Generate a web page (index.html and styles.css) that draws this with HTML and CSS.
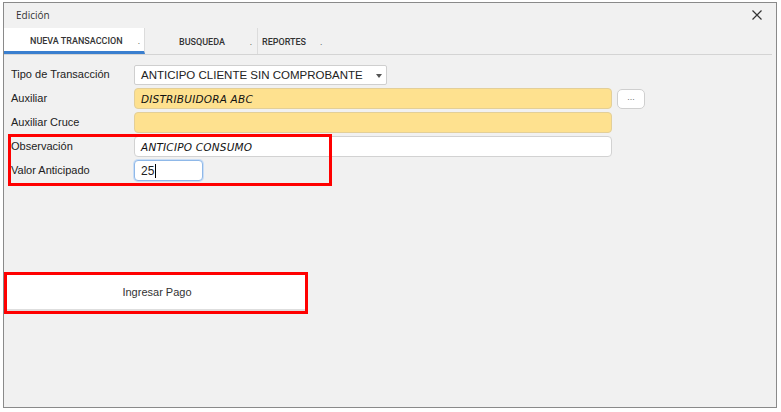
FILE: index.html
```html
<!DOCTYPE html>
<html lang="es">
<head>
    <meta charset="UTF-8">
    <title>Edición</title>
    <link rel="stylesheet" href="styles.css">
</head>
<body>
    <div class="window">
        <div class="titlebar">
            <span class="title">Edición</span>
            <span class="close">
                <svg width="10" height="10" viewBox="0 0 10 10"><path d="M0.5 0.5 L9.5 9.5 M9.5 0.5 L0.5 9.5" stroke="#333" stroke-width="1.2"/></svg>
            </span>
        </div>
        <div class="tabs">
            <div class="tab active"><span>NUEVA TRANSACCION</span><i>.</i></div>
            <div class="tab second"><span>BUSQUEDA</span><i>.</i></div>
            <div class="tab third"><span>REPORTES</span><i>.</i></div>
        </div>
        <div class="form">
            <div class="row">
                <label>Tipo de Transacción</label>
                <div class="select">ANTICIPO CLIENTE SIN COMPROBANTE<span class="arrow"></span></div>
            </div>
            <div class="row">
                <label>Auxiliar</label>
                <div class="field yellow hand">DISTRIBUIDORA ABC</div>
                <div class="dots">...</div>
            </div>
            <div class="row">
                <label>Auxiliar Cruce</label>
                <div class="field yellow"></div>
            </div>
            <div class="row">
                <label>Observación</label>
                <div class="field hand">ANTICIPO CONSUMO</div>
            </div>
            <div class="row">
                <label>Valor Anticipado</label>
                <div class="field small focus">25<span class="caret"></span></div>
            </div>
            <div class="mark mark-fields"></div>
        </div>
        <div class="actions">
            <div class="mark-button">
                <div class="button">Ingresar Pago</div>
            </div>
        </div>
    </div>
</body>
</html>
```

FILE: styles.css
```css
body, html {
    margin: 0;
    padding: 0;
    background: #ffffff;
}
body {
    font-family: 'Liberation Sans', Arial, sans-serif;
    color: #222;
}
.window {
    margin: 2px 0 0 3px;
    width: 774px;
    height: 406px;
    box-sizing: border-box;
    border: 1px solid #8a8a8a;
    background: #f1f1f1;
}
.titlebar {
    height: 25px;
    display: flex;
    align-items: center;
    justify-content: space-between;
    padding: 0 12px 1px 12px;
    box-sizing: border-box;
}
.title {
    font-family: 'Open Sans', sans-serif;
    font-size: 10px;
    color: #333;
}
.close {
    display: flex;
    margin-right: 2px;
}
.tabs {
    display: flex;
    height: 26px;
    margin-right: 4px;
    border-bottom: 1px solid #d4d4d4;
}
.tab {
    display: flex;
    align-items: center;
    font-family: 'Roboto', sans-serif;
    font-size: 9px;
    font-weight: 500;
    color: #333;
    border-right: 1px solid #dcdcdc;
    padding-top: 2px;
}
.tab i {
    font-style: normal;
    font-weight: normal;
    margin-left: auto;
}
.tab.active {
    width: 141px;
    background: #fff;
    border-bottom: 3px solid #3a7fcf;
    padding-left: 26px;
    padding-right: 4px;
    box-sizing: border-box;
}
.tab.second {
    width: 113px;
    padding-left: 34px;
    padding-right: 5px;
    box-sizing: border-box;
}
.tab.third {
    width: 70px;
    padding-left: 4px;
    box-sizing: border-box;
    border-right: none;
}
.tab.third i {
    margin-left: 14px;
}
.form {
    position: relative;
    padding: 9px 0 0 7px;
    display: flex;
    flex-direction: column;
    gap: 3px;
}
.row {
    display: flex;
    align-items: center;
    height: 21px;
}
.row label {
    width: 123px;
    font-size: 11px;
    color: #222;
    padding-bottom: 1px;
}
.select {
    width: 253px;
    height: 20px;
    box-sizing: border-box;
    background: #fff;
    border: 1px solid #cfcfcf;
    border-radius: 2px;
    display: flex;
    align-items: center;
    padding-left: 6px;
    font-size: 11.5px;
    position: relative;
}
.arrow {
    position: absolute;
    right: 4px;
    top: 8px;
    border-left: 3px solid transparent;
    border-right: 3px solid transparent;
    border-top: 4px solid #555;
}
.field {
    width: 478px;
    height: 21px;
    box-sizing: border-box;
    background: #fff;
    border: 1px solid #d2d2d2;
    border-radius: 4px;
    display: flex;
    align-items: center;
    padding-left: 6px;
    font-size: 11px;
}
.field.yellow {
    background: #fee18f;
    border-color: #e3cf98;
}
.hand {
    font-family: 'DejaVu Sans', sans-serif;
    font-style: italic;
    font-size: 10.5px;
    letter-spacing: 0.2px;
    color: #111;
}
.field.small {
    width: 69px;
    border-color: #8fb8e8;
    box-shadow: 0 0 0 1px #c9ddf5;
    font-size: 12px;
}
.caret {
    display: inline-block;
    width: 1px;
    height: 14px;
    background: #000;
    margin-left: 1px;
}
.dots {
    width: 28px;
    height: 20px;
    margin-left: 5px;
    box-sizing: border-box;
    background: #fff;
    border: 1px solid #cfcfcf;
    border-radius: 5px;
    display: flex;
    align-items: center;
    justify-content: center;
    font-size: 9px;
    color: #777;
    padding-bottom: 3px;
}
.mark-fields {
    position: absolute;
    left: 4px;
    top: 79px;
    width: 324px;
    height: 52px;
    box-sizing: border-box;
    border: 3px solid #ff0000;
}
.actions {
    padding: 91px 0 0 0;
}
.mark-button {
    width: 304px;
    height: 42px;
    box-sizing: border-box;
    border: 3px solid #ff0000;
    background: #fff;
    display: flex;
}
.button {
    flex: 1;
    display: flex;
    align-items: center;
    justify-content: center;
    font-size: 11px;
    color: #333;
    border-bottom: 2px solid #dedede;
    padding-left: 2px;
}
```
